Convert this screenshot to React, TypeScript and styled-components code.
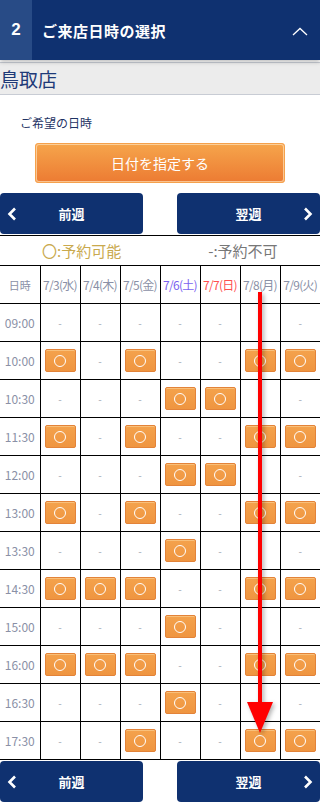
import React from 'react';
import styled, { createGlobalStyle } from 'styled-components';

const GlobalStyle = createGlobalStyle`
  body {
    margin: 0;
    background: #fff;
    font-family: "Noto Sans CJK JP", "Noto Sans", sans-serif;
  }
`;

type Day = { label: string; color: string };

const days: Day[] = [
  { label: '7/3(水)', color: '#8a90a6' },
  { label: '7/4(木)', color: '#8a90a6' },
  { label: '7/5(金)', color: '#8a90a6' },
  { label: '7/6(土)', color: '#7a62f0' },
  { label: '7/7(日)', color: '#ff4f4f' },
  { label: '7/8(月)', color: '#8a90a6' },
  { label: '7/9(火)', color: '#8a90a6' },
];

// o = 予約可能, - = 予約不可
const slots: [string, string][] = [
  ['09:00', '-------'],
  ['10:00', 'o-o--oo'],
  ['10:30', '---oo--'],
  ['11:30', 'o-o--oo'],
  ['12:00', '---oo--'],
  ['13:00', 'o-o--oo'],
  ['13:30', '---o---'],
  ['14:30', 'ooo--oo'],
  ['15:00', '---o---'],
  ['16:00', 'ooo--oo'],
  ['16:30', '---o---'],
  ['17:30', '--o--oo'],
];

const Page = styled.div`
  position: relative;
  width: 320px;
  overflow: hidden;
`;

const Header = styled.div`
  display: flex;
  align-items: center;
  height: 60px;
  background: #0f3170;
  color: #fff;
  box-shadow: 0 2px 4px rgba(0, 0, 0, 0.25);
  position: relative;
  z-index: 1;
`;

const StepNo = styled.div`
  width: 32px;
  height: 100%;
  display: flex;
  align-items: center;
  justify-content: center;
  background: #284b86;
  font-family: "Liberation Sans", Arial, sans-serif;
  font-weight: bold;
  font-size: 17px;
`;

const Title = styled.div`
  flex: 1;
  padding-left: 10px;
  font-size: 15px;
  font-weight: bold;
  letter-spacing: 0.5px;
`;

const Toggle = styled.div`
  width: 40px;
  display: flex;
  justify-content: center;
  padding-top: 2px;
`;

const StoreBar = styled.div`
  margin-top: 2px;
  height: 31px;
  display: flex;
  align-items: center;
  background: #ececec;
  border-top: 1px solid #c8ccd4;
  border-bottom: 1px solid #c8ccd4;
  color: #1e3a78;
  font-size: 19px;
`;

const Wish = styled.div`
  padding: 19px 0 0 20px;
  height: 20px;
  font-size: 12px;
  color: #1e3364;
`;

const DateButton = styled.div`
  margin: 9px auto 0;
  width: 250px;
  height: 40px;
  box-sizing: border-box;
  border-radius: 4px;
  background: linear-gradient(#f6a64c, #ec7a32);
  box-shadow: inset 0 0 0 1px #f5a14c, inset 0 0 0 2px rgba(255, 225, 185, 0.7);
  display: flex;
  align-items: center;
  justify-content: center;
  color: #fff;
  font-size: 14px;
`;

const NavRow = styled.div<{ $top: number }>`
  display: flex;
  justify-content: space-between;
  margin-top: ${(p) => p.$top}px;
`;

const NavButton = styled.div`
  position: relative;
  width: 143px;
  height: 41px;
  background: #0f3170;
  border-radius: 4px;
  color: #fff;
  font-size: 13px;
  font-weight: bold;
  display: flex;
  align-items: center;
  justify-content: center;
`;

const NavArrow = styled.svg<{ $dir: 'prev' | 'next' }>`
  position: absolute;
  top: 14px;
  ${(p) => (p.$dir === 'prev' ? 'left: 7px;' : 'right: 7px;')}
`;

const Legend = styled.div`
  margin-top: 1px;
  border-top: 1px solid #000;
  height: 29px;
  display: flex;
  align-items: center;
  font-size: 15px;
`;

const LegendItem = styled.div<{ $color: string; $left: number }>`
  color: ${(p) => p.$color};
  margin-left: ${(p) => p.$left}px;
`;

const Table = styled.table`
  width: 320px;
  border-collapse: collapse;
  table-layout: fixed;
  border-top: 1px solid #000;
  border-bottom: 1px solid #000;
`;

const HeadCell = styled.th<{ $color: string }>`
  height: 37px;
  padding: 0;
  font-weight: normal;
  font-size: 12px;
  letter-spacing: -0.7px;
  white-space: nowrap;
  overflow: visible;
  color: ${(p) => p.$color};
  border-left: 1px solid #000;
  border-bottom: 1px solid #000;
  text-align: center;
  &:first-child {
    border-left: none;
    font-size: 11px;
    letter-spacing: 0;
  }
`;

const Cell = styled.td`
  height: 37px;
  padding: 0;
  text-align: center;
  vertical-align: middle;
  border-left: 1px solid #000;
  border-bottom: 1px solid #000;
  color: #a0a6b4;
  font-size: 10px;
  &:first-child {
    border-left: none;
    font-size: 12px;
    color: #8a90a6;
  }
`;

const Slot = styled.div`
  width: 31px;
  height: 23px;
  margin: 0 auto;
  box-sizing: border-box;
  border-radius: 2px;
  background: linear-gradient(#f4a24c, #ef9540);
  border: 1px solid #e38339;
  box-shadow: inset 0 1px 0 #f9c07a;
  display: flex;
  align-items: center;
  justify-content: center;
`;

const Ring = styled.div`
  width: 10px;
  height: 10px;
  border: 1.3px solid #fff;
  border-radius: 50%;
`;

const Arrow = styled.svg`
  position: absolute;
  left: 246px;
  top: 292px;
  filter: drop-shadow(2px 2px 2px rgba(0, 0, 0, 0.3));
  pointer-events: none;
`;

const Nav = ({ top }: { top: number }) => (
  <NavRow $top={top}>
    <NavButton>
      <NavArrow $dir="prev" width="10" height="14" viewBox="0 0 10 14">
        <polyline points="8,1.5 2.5,7 8,12.5" fill="none" stroke="#fff" strokeWidth="2.6" />
      </NavArrow>
      前週
    </NavButton>
    <NavButton>
      <NavArrow $dir="next" width="10" height="14" viewBox="0 0 10 14">
        <polyline points="2,1.5 7.5,7 2,12.5" fill="none" stroke="#fff" strokeWidth="2.6" />
      </NavArrow>
      翌週
    </NavButton>
  </NavRow>
);

export default function App() {
  return (
    <Page>
      <GlobalStyle />
      <Header>
        <StepNo>2</StepNo>
        <Title>ご来店日時の選択</Title>
        <Toggle>
          <svg width="16" height="9" viewBox="0 0 16 9">
            <polyline points="1,8 8,1.5 15,8" fill="none" stroke="#fff" strokeWidth="1.3" />
          </svg>
        </Toggle>
      </Header>
      <StoreBar>鳥取店</StoreBar>
      <Wish>ご希望の日時</Wish>
      <DateButton>日付を指定する</DateButton>
      <Nav top={10} />
      <Legend>
        <LegendItem $color="#c9a94e" $left={42}>〇:予約可能</LegendItem>
        <LegendItem $color="#777" $left={87}>-:予約不可</LegendItem>
      </Legend>
      <Table>
        <thead>
          <tr>
            <HeadCell $color="#8a90a6">日時</HeadCell>
            {days.map((d) => (
              <HeadCell key={d.label} $color={d.color}>
                {d.label}
              </HeadCell>
            ))}
          </tr>
        </thead>
        <tbody>
          {slots.map(([time, marks]) => (
            <tr key={time}>
              <Cell>{time}</Cell>
              {marks.split('').map((m, i) => (
                <Cell key={i}>
                  {m === 'o' ? (
                    <Slot>
                      <Ring />
                    </Slot>
                  ) : (
                    '-'
                  )}
                </Cell>
              ))}
            </tr>
          ))}
        </tbody>
      </Table>
      <Nav top={1} />
      <Arrow width="28" height="445" viewBox="0 0 28 445">
        <rect x="12" y="0" width="4" height="418" fill="#ff0000" />
        <polygon points="1,410 27,410 14,441" fill="#ff0000" />
      </Arrow>
    </Page>
  );
}
